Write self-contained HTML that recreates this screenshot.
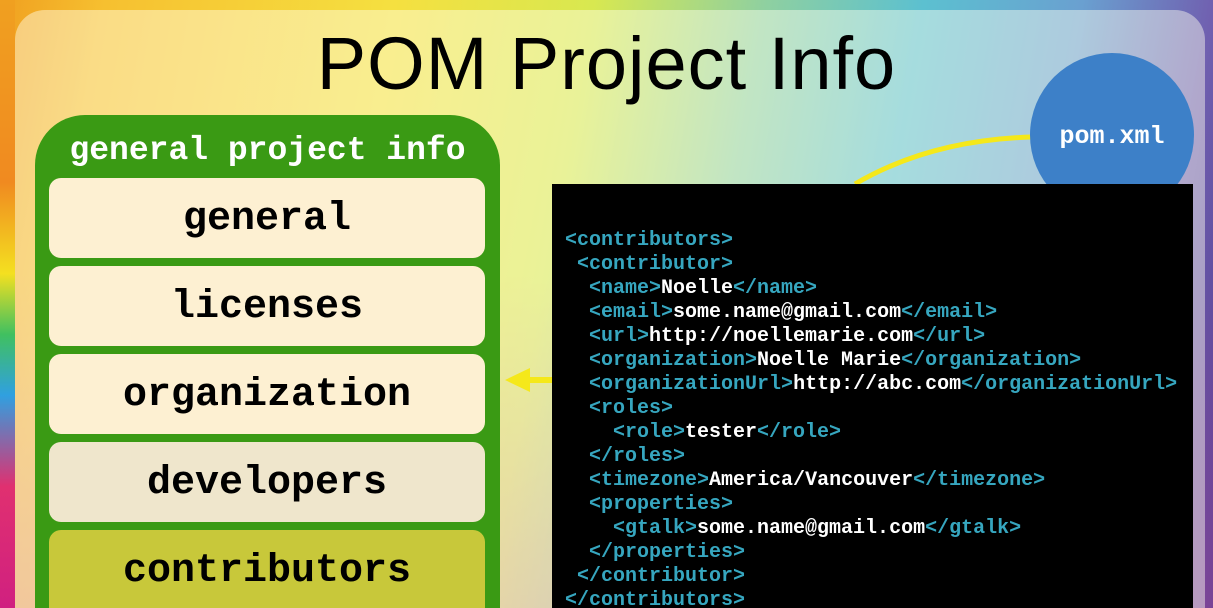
<!DOCTYPE html>
<html><head><meta charset="utf-8"><style>
*{margin:0;padding:0;box-sizing:border-box}
html,body{width:1213px;height:608px;overflow:hidden}
body{position:relative;font-family:"Liberation Sans",sans-serif;
background:linear-gradient(100deg,#f0a020 0%,#f6c030 8%,#f5e040 30%,#d8e850 45%,#8fd0a0 58%,#5cc0d0 70%,#6aa0d0 82%,#7060b0 92%,#503c90 100%);}
.wrap{position:absolute;left:0;top:0;width:1213px;height:608px;overflow:hidden}
.bg2{position:absolute;inset:0;background:linear-gradient(180deg,rgba(0,0,0,0) 45%,rgba(200,80,160,0.35) 100%)}
.panel{position:absolute;left:15px;top:10px;width:1190px;height:598px;border-radius:30px 30px 0 0;background:rgba(255,255,240,0.45)}
.lstrip{position:absolute;left:0;top:0;width:15px;height:608px;background:linear-gradient(180deg,#f0a020 0%,#f08a20 30%,#f4e020 45%,#40c060 55%,#30a0e0 65%,#e03070 80%,#d02080 100%)}
h1{position:absolute;left:0;width:1213px;top:22px;text-align:center;font-weight:normal;font-size:74px;line-height:84px;color:#000;letter-spacing:1px}
.mono{font-family:"Liberation Mono","DejaVu Sans Mono",monospace;font-weight:bold}
.green{position:absolute;left:35px;top:115px;width:465px;height:493px;background:#3a9a14;border-radius:50px 50px 0 0}
.ghead{position:absolute;left:35px;top:132px;width:465px;text-align:center;color:#fff;font-size:33px;line-height:38px}
.item{position:absolute;left:49px;width:436px;height:80px;border-radius:12px;background:#fdf0d2;text-align:center;line-height:84px;font-size:40px;color:#000}
.code{position:absolute;left:552px;top:184px;width:641px;height:424px;background:#000}
pre{position:absolute;left:565px;top:229px;font-size:20px;line-height:24px;color:#fff;height:379px;overflow:hidden}
.t{color:#36a6bf}
.circle{position:absolute;left:1030px;top:53px;width:164px;height:164px;border-radius:50%;background:#3d80c8;color:#fff;font-size:25px;text-align:center;line-height:168px}
</style></head><body><div class="wrap">
<div class="bg2"></div>
<div class="lstrip"></div>
<div class="panel"></div>
<h1>POM Project Info</h1>
<svg style="position:absolute;left:0;top:0" width="1213" height="608">
<path d="M855 184 Q930 140 1032 137" stroke="#f5e81a" stroke-width="5" fill="none"/>
<path d="M552 380 L525 380" stroke="#f5e81a" stroke-width="6"/>
<path d="M505 380 L530 368 L530 392 Z" fill="#f5e81a"/>
</svg>
<div class="circle mono">pom.xml</div>
<div class="green"></div>
<div class="ghead mono">general project info</div>
<div class="item mono" style="top:178px">general</div>
<div class="item mono" style="top:266px">licenses</div>
<div class="item mono" style="top:354px">organization</div>
<div class="item mono" style="top:442px;background:#efe6cc">developers</div>
<div class="item mono" style="top:530px;height:78px;border-radius:12px 12px 0 0;background:#c8c83a">contributors</div>
<div class="code"></div>
<pre class="mono"><span class="t">&lt;contributors&gt;</span>
 <span class="t">&lt;contributor&gt;</span>
  <span class="t">&lt;name&gt;</span>Noelle<span class="t">&lt;/name&gt;</span>
  <span class="t">&lt;email&gt;</span>some.name@gmail.com<span class="t">&lt;/email&gt;</span>
  <span class="t">&lt;url&gt;</span>http://noellemarie.com<span class="t">&lt;/url&gt;</span>
  <span class="t">&lt;organization&gt;</span>Noelle Marie<span class="t">&lt;/organization&gt;</span>
  <span class="t">&lt;organizationUrl&gt;</span>http://abc.com<span class="t">&lt;/organizationUrl&gt;</span>
  <span class="t">&lt;roles&gt;</span>
    <span class="t">&lt;role&gt;</span>tester<span class="t">&lt;/role&gt;</span>
  <span class="t">&lt;/roles&gt;</span>
  <span class="t">&lt;timezone&gt;</span>America/Vancouver<span class="t">&lt;/timezone&gt;</span>
  <span class="t">&lt;properties&gt;</span>
    <span class="t">&lt;gtalk&gt;</span>some.name@gmail.com<span class="t">&lt;/gtalk&gt;</span>
  <span class="t">&lt;/properties&gt;</span>
 <span class="t">&lt;/contributor&gt;</span>
<span class="t">&lt;/contributors&gt;</span></pre>
</div></body></html>
